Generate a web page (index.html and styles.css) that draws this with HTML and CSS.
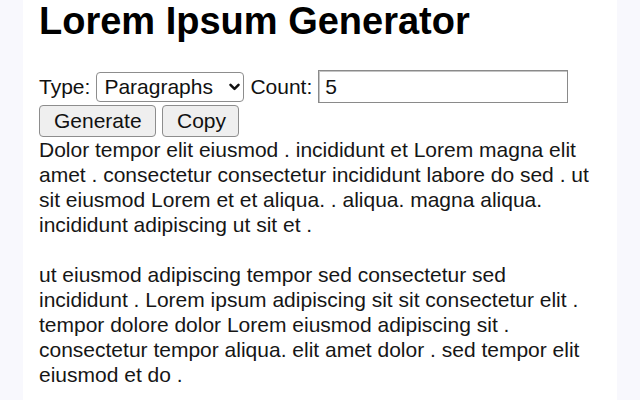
FILE: index.html
```html
<!DOCTYPE html>
<html lang="en">
<head>
<meta charset="utf-8">
<title>Lorem Ipsum Generator</title>
<link rel="stylesheet" href="styles.css">
</head>
<body>
<main class="page">
  <h1 class="title">Lorem Ipsum Generator</h1>
  <div class="controls">
    <label class="label" for="type">Type:</label>
    <span class="select-wrap">
      <select id="type" class="select">
        <option>Paragraphs</option>
        <option>Sentences</option>
        <option>Words</option>
      </select>
      <svg class="chevron" width="11" height="8" viewBox="0 0 11 8" aria-hidden="true"><path d="M1.5 1.8 L5.5 5.8 L9.5 1.8" fill="none" stroke="#111" stroke-width="2.5" stroke-linecap="round" stroke-linejoin="round"/></svg>
    </span>
    <label class="label" for="count">Count:</label>
    <input id="count" class="input" type="text" value="5">
  </div>
  <div class="buttons">
    <button class="btn btn-generate" type="button">Generate</button>
    <button class="btn btn-copy" type="button">Copy</button>
  </div>
  <div class="output">
    <p class="para">Dolor tempor elit eiusmod . incididunt et Lorem magna elit amet . consectetur consectetur incididunt labore do sed . ut sit eiusmod Lorem et et aliqua. . aliqua. magna aliqua. incididunt adipiscing ut sit et .</p>
    <p class="para">ut eiusmod adipiscing tempor sed consectetur sed incididunt . Lorem ipsum adipiscing sit sit consectetur elit . tempor dolore dolor Lorem eiusmod adipiscing sit . consectetur tempor aliqua. elit amet dolor . sed tempor elit eiusmod et do .</p>
  </div>
</main>
</body>
</html>
```

FILE: styles.css
```css
html, body {
  margin: 0;
  padding: 0;
}

body {
  background: #f8f8fd;
  font-family: "Liberation Sans", Arial, sans-serif;
  color: #111;
}

.page {
  box-sizing: border-box;
  width: 594px;
  min-height: 400px;
  margin: 0 auto;
  padding: 0 22px 0 16px;
  background: #ffffff;
}

.title {
  margin: 0 0 27px;
  font-size: 38px;
  font-weight: bold;
  line-height: normal;
  color: #000;
}

.controls {
  display: flex;
  align-items: center;
  gap: 6px;
  height: 33px;
  font-size: 21px;
}

.label {
  color: #111;
}

.select-wrap {
  position: relative;
  display: inline-block;
}

.select {
  -webkit-appearance: none;
  appearance: none;
  box-sizing: border-box;
  width: 148px;
  height: 30px;
  padding: 0 0 0 7px;
  border: 1px solid #8d8d8d;
  border-radius: 4px;
  background: #fff;
  font-family: "Liberation Sans", Arial, sans-serif;
  font-size: 21px;
  color: #111;
  display: block;
}

.chevron {
  position: absolute;
  right: 4px;
  top: 11px;
  pointer-events: none;
}

.input {
  box-sizing: border-box;
  width: 250px;
  height: 33px;
  padding: 0 6px;
  border: 1px solid #8a8a8a;
  box-shadow: inset 1px 1px 0 #c4c4c4;
  border-radius: 0;
  background: #fff;
  font-family: "Liberation Sans", Arial, sans-serif;
  font-size: 21px;
  color: #111;
}

.buttons {
  display: flex;
  gap: 6px;
  margin-top: 2px;
}

.btn {
  box-sizing: border-box;
  height: 32px;
  padding: 0 14px;
  border: 1px solid #8d8d8d;
  border-radius: 4px;
  background: #efefef;
  font-family: "Liberation Sans", Arial, sans-serif;
  font-size: 21px;
  color: #111;
}

.btn-generate {
  width: 117px;
}

.btn-copy {
  width: 77px;
}

.output {
  font-size: 21px;
  line-height: 25px;
  color: #161616;
}

.para {
  margin: 0;
}

.para + .para {
  margin-top: 25px;
}
```
